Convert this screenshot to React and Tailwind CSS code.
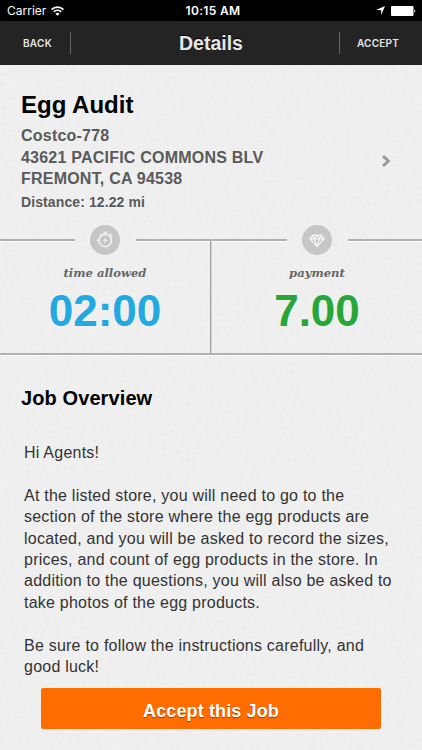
// Body copy, one array per paragraph, one entry per line
const overview = [
  ["Hi Agents!"],
  [
    "At the listed store, you will need to go to the",
    "section of the store where the egg products are",
    "located, and you will be asked to record the sizes,",
    "prices, and count of egg products in the store. In",
    "addition to the questions, you will also be asked to",
    "take photos of the egg products.",
  ],
  ["Be sure to follow the instructions carefully, and", "good luck!"],
];

const StopwatchIcon = () => (
  <svg width="30" height="30" viewBox="0 0 30 30" fill="none" className="block">
    <circle cx="15" cy="15" r="15" fill="#c6c6c6" />
    <circle cx="15.2" cy="15.4" r="6.2" stroke="#f0f0f0" strokeWidth="1.7" />
    <path d="M13.3 7.4h3.6M15.1 7.4v2M20 8.8l2.2 2.2M10 9.2l1.4 1.4M6.6 15.2h2.4" stroke="#f0f0f0" strokeWidth="1.5" />
    <path d="M16.4 12l-3.6 3.8h2.1l-1 3 3.9-4h-2.2z" fill="#f0f0f0" />
  </svg>
);

const DiamondIcon = () => (
  <svg width="30" height="30" viewBox="0 0 30 30" fill="none" className="block">
    <circle cx="15" cy="15" r="15" fill="#c6c6c6" />
    <path
      d="M10.8 10.2h8.4l3 3.6L15 21.6l-7.2-7.8zM7.8 13.8h14.4M10.8 10.2l1.6 3.6L15 21.6l2.6-7.8 1.6-3.6M12.4 13.8L15 10.2l2.6 3.6"
      stroke="#f4f4f4"
      strokeWidth="1.3"
      strokeLinejoin="round"
    />
  </svg>
);

const StatusBar = () => (
  <div className="grid h-[21px] grid-cols-3 items-center bg-black pl-[7px] pr-[6px] text-white">
    <div className="flex items-center gap-[5px]">
      <span className="font-['Inter',sans-serif] text-[12px] leading-none">Carrier</span>
      <svg width="13" height="10" viewBox="0 0 13 10" fill="none">
        <path d="M0.6 3.6a8.3 8.3 0 0 1 11.8 0" stroke="white" strokeWidth="1.8" />
        <path d="M2.7 5.9a5.3 5.3 0 0 1 7.6 0" stroke="white" strokeWidth="1.6" />
        <path d="M6.5 9.8L4.4 7.7a3 3 0 0 1 4.2 0z" fill="white" />
      </svg>
    </div>
    <span className="pl-[3px] text-center font-['Inter',sans-serif] text-[12px] font-semibold leading-none tracking-[0.35px]">
      10:15 AM
    </span>
    <div className="flex items-center justify-end gap-[6px]">
      <svg width="9" height="9" viewBox="0 0 9 9">
        <path d="M9 0L5.2 9V4.3L0 4z" fill="white" />
      </svg>
      <svg width="25" height="10" viewBox="0 0 25 10">
        <rect width="22.5" height="10" rx="1" fill="white" />
        <path d="M23.3 3.4c1.4 0.4 1.4 2.8 0 3.2z" fill="white" />
      </svg>
    </div>
  </div>
);

const Header = () => (
  <header className="grid h-[44px] grid-cols-[83px_1fr_83px] items-center bg-[#242424] text-[#e6e6e6]">
    <button className="flex h-[22px] w-[71px] items-center justify-center border-r border-[#666] pl-[5px] font-['Inter',sans-serif] text-[10px] font-semibold tracking-[0.3px]">
      BACK
    </button>
    <h1 className="text-center text-[19.5px] font-bold leading-[28px] [text-shadow:0_-1px_0_#000]">Details</h1>
    <button className="flex h-[22px] w-[83px] items-center justify-center border-l border-[#666] pr-[6px] font-['Inter',sans-serif] text-[10px] font-semibold tracking-[0.2px]">
      ACCEPT
    </button>
  </header>
);

const Stat = ({ icon, label, value, valueClass }) => (
  <div className="flex flex-1 flex-col items-center">
    <div className="flex w-full items-center">
      <div className="h-[3px] flex-1 border-b border-white bg-[#b0b0b0]" />
      <div className="flex w-[61px] justify-center">{icon}</div>
      <div className="h-[3px] flex-1 border-b border-white bg-[#b0b0b0]" />
    </div>
    <span className="mt-[8px] font-['DejaVu_Serif',serif] text-[11.6px] font-bold italic leading-[20px] text-[#666]">
      {label}
    </span>
    <span className={`mt-[5px] text-[44px] font-bold leading-[46px] ${valueClass}`}>{value}</span>
  </div>
);

const PaperTexture = () => (
  <svg className="absolute inset-0 h-full w-full opacity-[0.07]">
    <filter id="paper">
      <feTurbulence type="fractalNoise" baseFrequency="0.3" numOctaves="3" />
      <feColorMatrix type="saturate" values="0" />
    </filter>
    <rect width="100%" height="100%" filter="url(#paper)" />
  </svg>
);

const App = () => {
  return (
    <div className="relative h-[750px] w-[422px] overflow-hidden bg-[#f1f1f1] font-['Liberation_Sans',Arial,sans-serif]">
      <PaperTexture />
      <div className="relative flex h-full flex-col">
        <StatusBar />
        <Header />

        {/* Store */}
        <section className="flex h-[160px] items-start justify-between pl-[21px] pr-[31px] pt-[24px]">
          <div className="whitespace-nowrap font-bold text-[#5a5a5a]">
            <h2 className="text-[24px] leading-[32px] text-black">Egg Audit</h2>
            <div className="mt-[4px] text-[16px] leading-[21.6px] tracking-[0.22px]">
              <p>Costco-778</p>
              <p>43621 PACIFIC COMMONS BLV</p>
              <p>FREMONT, CA 94538</p>
            </div>
            <p className="text-[14px] leading-[25px] tracking-[0.1px]">Distance: 12.22 mi</p>
          </div>
          <svg width="10" height="14" viewBox="0 0 10 14" fill="none" className="mt-[65px]">
            <path d="M2 2l5.4 5L2 12" stroke="#999" strokeWidth="3" />
          </svg>
        </section>

        {/* Time and payment */}
        <section className="flex h-[128px]">
          <Stat icon={<StopwatchIcon />} label="time allowed" value="02:00" valueClass="text-[#23a9e1]" />
          <div className="mt-[14px] w-[2px] border-r border-[#d4d4d4] bg-[#a0a0a0]" />
          <Stat icon={<DiamondIcon />} label="payment" value="7.00" valueClass="text-[#27a737]" />
        </section>
        <div className="h-[3px] border-b border-white bg-[#b0b0b0]" />

        {/* Job overview */}
        <section className="flex-1 pl-[21px] pt-[29px]">
          <h2 className="text-[20px] font-bold leading-[26px] tracking-[0.1px] text-black">Job Overview</h2>
          <div className="mt-[31px] space-y-[21.4px] whitespace-nowrap pl-[3px] text-[16px] leading-[21.4px] tracking-[0.23px] text-[#333]">
            {overview.map((lines) => (
              <div key={lines[0]}>
                {lines.map((line) => (
                  <p key={line}>{line}</p>
                ))}
              </div>
            ))}
          </div>
        </section>

        <button className="mx-[41px] mb-[21px] h-[41px] rounded-[2px] bg-[#ff6c00] pt-[6px] text-[18px] font-bold tracking-[0.13px] text-white [text-shadow:0_1px_1px_rgba(0,0,0,0.4)]">
          Accept this Job
        </button>
      </div>
    </div>
  );
};

export default App;
